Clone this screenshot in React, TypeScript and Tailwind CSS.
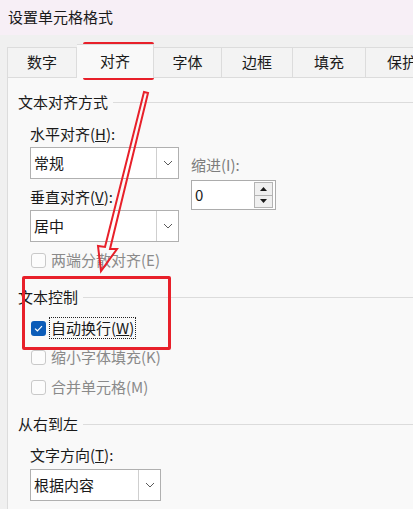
import React from "react";

const FONT = { fontFamily: '"Noto Sans CJK SC", "Noto Sans", sans-serif' };

function Chevron() {
  return (
    <svg width="10" height="6" viewBox="0 0 10 6" fill="none">
      <path d="M1 1 L5 5 L9 1" stroke="#5a5a5a" strokeWidth="1" />
    </svg>
  );
}

function Select({ value, w, divider }: { value: string; w: string; divider: string }) {
  return (
    <div className={`flex h-[32px] ${w} border border-[#b0b0b0] bg-white`}>
      <div className="flex-1 flex items-center pl-[3px] text-[15px] text-[#1a1a1a]">{value}</div>
      <div className={`${divider} flex items-center justify-center border-l border-[#cfcfcf]`}>
        <Chevron />
      </div>
    </div>
  );
}

function Group({ title }: { title: string }) {
  return (
    <div className="flex items-center h-[20px]">
      <span className="text-[15px] leading-[20px] text-[#1a1a1a]">{title}</span>
      <div className="flex-1 h-px bg-[#dcdcdc] ml-[5px]" />
    </div>
  );
}

function Box({ checked }: { checked?: boolean }) {
  if (checked)
    return (
      <div className="w-[15px] h-[15px] rounded-[3px] bg-[#0b5cb8] flex items-center justify-center">
        <svg width="9" height="7" viewBox="0 0 9 7" fill="none">
          <path d="M1 3.6 L3.4 5.8 L8 1.2" stroke="white" strokeWidth="1.2" />
        </svg>
      </div>
    );
  return <div className="w-[15px] h-[15px] rounded-[3px] border border-[#c9c9c9] bg-[#fcfcfc]" />;
}

export default function App() {
  const tabs = [
    { t: "数字", w: "w-[70px]" },
    { t: "对齐", w: "w-[77px]", sel: true },
    { t: "字体", w: "w-[68px]" },
    { t: "边框", w: "w-[71px]" },
    { t: "填充", w: "w-[73px]" },
    { t: "保护", w: "w-[73px]" },
  ];
  return (
    <div style={FONT} className="relative w-[413px] h-[509px] overflow-hidden bg-[#f0f0f0] flex flex-col">
      <div className="h-[35px] shrink-0 bg-[#f7eff6] flex items-center pl-[8px] text-[15px] text-[#1a1a1a]">
        设置单元格格式
      </div>
      <div className="h-[42px] shrink-0 flex items-end pl-[7px]">
        {tabs.map((tab, i) => (
          <div
            key={tab.t}
            className={
              tab.sel
                ? `${tab.w} shrink-0 h-[34px] -mb-px relative z-10 bg-[#f9f9f9] border-t border-r border-[#dcdcdc] flex items-center justify-center text-[15px] text-[#1a1a1a]`
                : `${tab.w} shrink-0 h-[30px] bg-[#f3f3f3] border-t border-r ${i === 0 ? "border-l" : ""} border-[#dcdcdc] flex items-center justify-center text-[15px] text-[#1a1a1a]`
            }
          >
            {tab.t}
          </div>
        ))}
      </div>
      <div className="flex-1 ml-[7px] bg-[#f9f9f9] border-l border-t border-[#dcdcdc] pl-[10px] pt-[14px] flex flex-col">
        <Group title="文本对齐方式" />
        <div className="flex pl-[12px] mt-[12px]">
          <div className="flex flex-col w-[149px]">
            <div className="h-[20px] text-[15px] leading-[20px] text-[#1a1a1a]">
              水平对齐(<span className="underline">H</span>):
            </div>
            <div className="mt-[3px]">
              <Select value="常规" w="w-[149px]" divider="w-[22px]" />
            </div>
            <div className="mt-[8px] h-[20px] text-[15px] leading-[20px] text-[#1a1a1a]">
              垂直对齐(<span className="underline">V</span>):
            </div>
            <div className="mt-[3px]">
              <Select value="居中" w="w-[149px]" divider="w-[22px]" />
            </div>
          </div>
          <div className="flex flex-col ml-[12px] mt-[31px]">
            <div className="h-[20px] text-[15px] leading-[20px] text-[#7d7d7d]">缩进(I):</div>
            <div className="mt-[5px] flex w-[85px] h-[30px] border border-[#acacac] bg-white">
              <div className="flex-1 flex items-center pl-[3px] text-[15px] text-[#1a1a1a]">0</div>
              <div className="flex flex-col w-[19px] mr-[2px] py-px">
                <div className="flex-1 border border-[#b4b4b4] bg-[#f0f0f0] flex items-center justify-center">
                  <svg width="7" height="4" viewBox="0 0 7 4">
                    <path d="M0 4 L3.5 0 L7 4 Z" fill="#1a1a1a" />
                  </svg>
                </div>
                <div className="flex-1 border border-t-0 border-[#b4b4b4] bg-[#f0f0f0] flex items-center justify-center">
                  <svg width="7" height="4" viewBox="0 0 7 4">
                    <path d="M0 0 L3.5 4 L7 0 Z" fill="#1a1a1a" />
                  </svg>
                </div>
              </div>
            </div>
          </div>
        </div>
        <div className="pl-[13px] mt-[8px] h-[20px] flex items-center gap-[5px] text-[15px] text-[#8a8a8a]">
          <Box />
          <span>两端分散对齐(E)</span>
        </div>
        <div className="mt-[17px]">
          <Group title="文本控制" />
        </div>
        <div className="pl-[13px] mt-[11px] h-[20px] flex items-center text-[15px] text-[#1a1a1a]">
          <Box checked />
          <span className="ml-[3px] border border-dotted border-[#222] px-[1px] h-[22px] leading-[20px]">
            自动换行(<span className="underline">W</span>)
          </span>
        </div>
        <div className="pl-[13px] mt-[9px] h-[20px] flex items-center gap-[5px] text-[15px] text-[#8a8a8a]">
          <Box />
          <span>缩小字体填充(K)</span>
        </div>
        <div className="pl-[13px] mt-[10px] h-[20px] flex items-center gap-[5px] text-[15px] text-[#8a8a8a]">
          <Box />
          <span>合并单元格(M)</span>
        </div>
        <div className="mt-[17px]">
          <Group title="从右到左" />
        </div>
        <div className="pl-[12px] mt-[11px] h-[20px] text-[15px] leading-[20px] text-[#1a1a1a]">
          文字方向(<span className="underline">T</span>):
        </div>
        <div className="pl-[12px] mt-[4px]">
          <Select value="根据内容" w="w-[131px]" divider="w-[22px]" />
        </div>
      </div>

      {/* red annotation overlays */}
      <div className="absolute left-[83px] top-[42px] w-[71px] h-[38px] border-[3px] border-[#e8202a] rounded-[2px] pointer-events-none" />
      <div className="absolute left-[22px] top-[276px] w-[149px] h-[74px] border-[3px] border-[#e8202a] rounded-[2px] pointer-events-none" />
      <svg className="absolute left-0 top-0 pointer-events-none" width="413" height="509">
        <polygon
          points="144,92 105,247 98,246 101,271 117,249 110,249 148,93"
          fill="none"
          stroke="#e8202a"
          strokeWidth="2"
          strokeLinejoin="miter"
        />
      </svg>
    </div>
  );
}
